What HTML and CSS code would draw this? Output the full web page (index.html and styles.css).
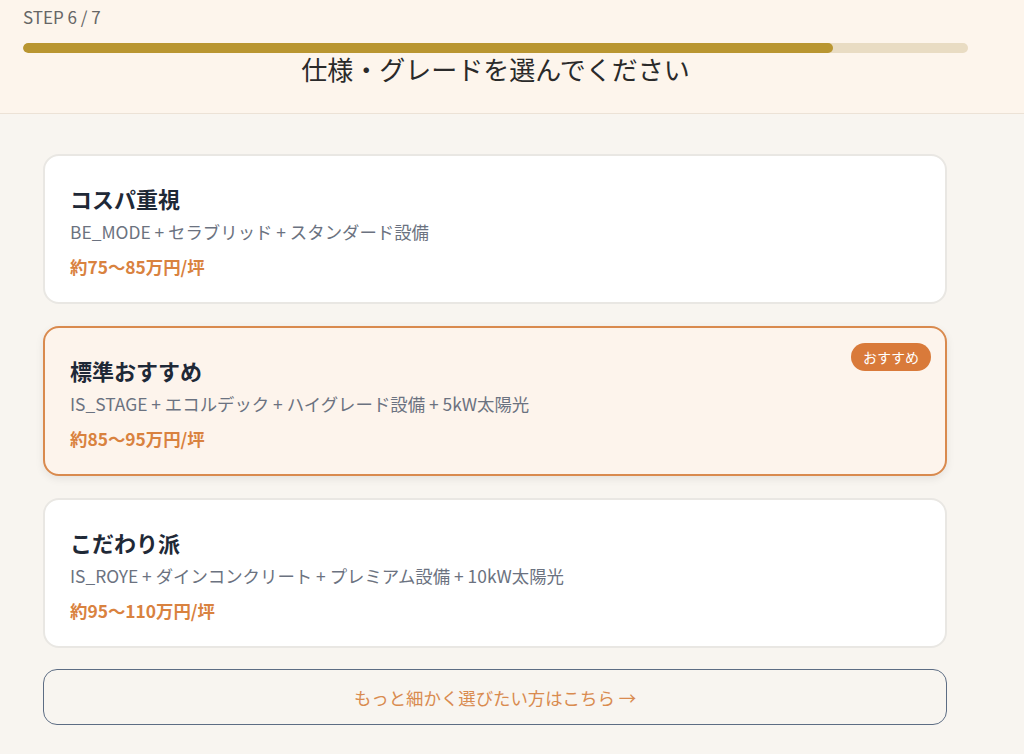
FILE: index.html
```html
<!DOCTYPE html>
<html lang="ja">

<head>
    <meta charset="UTF-8">
    <meta name="viewport" content="width=device-width, initial-scale=1.0">
    <title>仕様・グレード選択</title>
    <link rel="stylesheet" href="styles.css">
</head>

<body>
    <header class="header">
        <div class="step">STEP 6 / 7</div>
        <div class="progress">
            <div class="progress-fill" style="width: 85.7%"></div>
        </div>
        <h1 class="title">仕様・グレードを選んでください</h1>
    </header>

    <main class="main">
        <div class="card">
            <div class="card-title">コスパ重視</div>
            <div class="card-sub">BE_MODE + セラブリッド + スタンダード設備</div>
            <div class="card-price">約75〜85万円/坪</div>
        </div>

        <div class="card selected">
            <span class="badge">おすすめ</span>
            <div class="card-title">標準おすすめ</div>
            <div class="card-sub">IS_STAGE + エコルデック + ハイグレード設備 + 5kW太陽光</div>
            <div class="card-price">約85〜95万円/坪</div>
        </div>

        <div class="card">
            <div class="card-title">こだわり派</div>
            <div class="card-sub">IS_ROYE + ダインコンクリート + プレミアム設備 + 10kW太陽光</div>
            <div class="card-price">約95〜110万円/坪</div>
        </div>

        <button class="detail-btn">もっと細かく選びたい方はこちら →</button>
    </main>
</body>

</html>
```

FILE: styles.css
```css
body {
    margin: 0;
    font-family: "Noto Sans CJK JP", "Noto Sans", sans-serif;
    background-color: #f8f5f0;
    color: #1f2937;
}

.header {
    background-color: #fdf5ec;
    border-bottom: 1px solid #ece2d6;
    padding: 6px 56px 28px 23px;
}

.step {
    font-size: 17px;
    line-height: 22px;
    color: #666;
}

.progress {
    margin-top: 15px;
    height: 10px;
    border-radius: 5px;
    background-color: #e9dcc3;
    overflow: hidden;
}

.progress-fill {
    height: 100%;
    border-radius: 5px;
    background-color: #b99631;
}

.title {
    margin: 0;
    text-align: center;
    font-size: 26px;
    line-height: 32px;
    font-weight: 400;
    color: #2a2a2a;
}

.main {
    padding: 40px 77px 30px 43px;
    display: flex;
    flex-direction: column;
    gap: 22px;
}

.card {
    position: relative;
    background-color: #fff;
    border: 2px solid #e9e7e3;
    border-radius: 16px;
    padding: 26px 25px 22px;
}

.card.selected {
    background-color: #fdf4ec;
    border-color: #d98a4e;
    box-shadow: 0 3px 8px rgba(0, 0, 0, 0.08);
}

.card-title {
    font-size: 22px;
    line-height: 32px;
    font-weight: 700;
    color: #1f2937;
}

.card-sub {
    margin-top: 5px;
    font-size: 17.4px;
    line-height: 26px;
    color: #6b7280;
}

.card-price {
    margin-top: 9px;
    font-size: 17.4px;
    line-height: 26px;
    font-weight: 700;
    color: #d9823f;
}

.badge {
    position: absolute;
    top: 15px;
    right: 14px;
    padding: 0 12px;
    height: 28px;
    line-height: 28px;
    border-radius: 14px;
    background-color: #d97a3a;
    color: #fff;
    font-size: 14px;
}

.detail-btn {
    margin-top: -1px;
    height: 56px;
    border: 1.5px solid #5d6d84;
    border-radius: 14px;
    background: transparent;
    color: #d98b4f;
    font-family: inherit;
    font-size: 17.4px;
    cursor: pointer;
}
```
